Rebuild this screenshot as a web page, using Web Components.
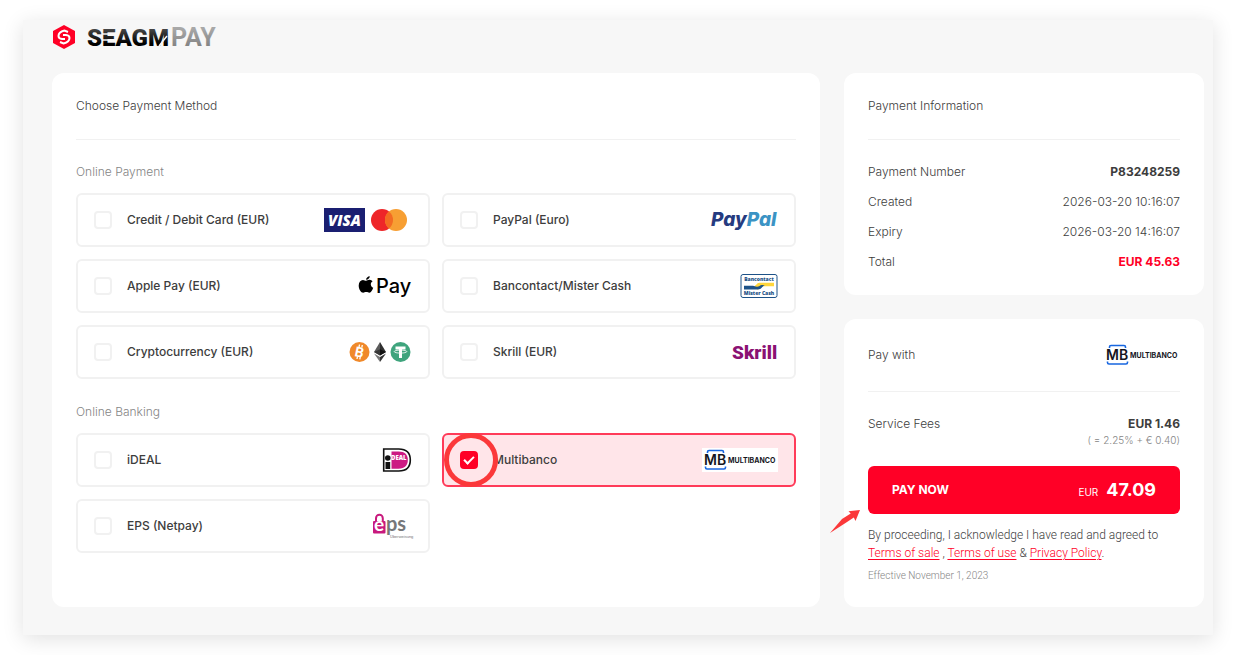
<!DOCTYPE html>
<html lang="en">
<head>
<meta charset="utf-8">
<meta name="viewport" content="width=device-width, initial-scale=1">
<title>SEAGM Pay</title>
<style>
    :root {
        --red: #ff0026;
        --text: #3d3d3d;
        --muted: #858585;
        --line: #f1f1f1;
        --narrow: Roboto, "Liberation Sans", sans-serif;
    }
    body {
        margin: 0;
        padding: 20px 23px;
        background: #fff;
        color: var(--text);
        font: 300 12px/18px Inter, "Liberation Sans", sans-serif;
    }
</style>
</head>
<body>
<checkout-page>
    <seagm-logo slot="header"></seagm-logo>

    <page-card slot="main">
        <span slot="title">Choose Payment Method</span>
        <payment-group label="Online Payment">
            <payment-option brand="cards">Credit / Debit Card (EUR)</payment-option>
            <payment-option brand="paypal">PayPal (Euro)</payment-option>
            <payment-option brand="applepay">Apple Pay (EUR)</payment-option>
            <payment-option brand="bancontact">Bancontact/Mister Cash</payment-option>
            <payment-option brand="crypto">Cryptocurrency (EUR)</payment-option>
            <payment-option brand="skrill">Skrill (EUR)</payment-option>
        </payment-group>
        <payment-group label="Online Banking">
            <payment-option brand="ideal">iDEAL</payment-option>
            <payment-option brand="multibanco" checked marked>Multibanco</payment-option>
            <payment-option brand="eps">EPS (Netpay)</payment-option>
        </payment-group>
    </page-card>

    <page-card slot="side">
        <span slot="title">Payment Information</span>
        <info-list>
            <info-row label="Payment Number" strong>P83248259</info-row>
            <info-row label="Created">2026-03-20 10:16:07</info-row>
            <info-row label="Expiry">2026-03-20 14:16:07</info-row>
            <info-row label="Total" strong accent>EUR 45.63</info-row>
        </info-list>
    </page-card>

    <page-card slot="side">
        <span slot="title">Pay with</span>
        <brand-logo slot="title" name="multibanco"></brand-logo>
        <info-row label="Service Fees" note="( = 2.25% + € 0.40)" strong>EUR 1.46</info-row>
        <pay-button currency="EUR" amount="47.09">PAY NOW</pay-button>
        <terms-note></terms-note>
    </page-card>
</checkout-page>

<script>
const LOGOS = {
    cards: `<svg width="88" height="24" viewBox="0 0 88 24">
        <rect width="41" height="24" fill="#1a1f71"/>
        <text x="4" y="18" font-family="Open Sans" font-size="15" font-weight="800" font-style="italic" fill="#fff">VISA</text>
        <circle cx="58" cy="12" r="11" fill="#ee2629"/>
        <circle cx="72" cy="12" r="11" fill="#f79f33"/>
        <path d="M65 3.500a11 11 0 0 1 0 17a11 11 0 0 1 0-17z" fill="#f36b22"/>
    </svg>`,
    paypal: `<svg width="68" height="24" viewBox="0 0 68 24">
        <text x="1" y="18" font-family="Inter" font-size="19" font-weight="800" font-style="italic" fill="#253b80">Pay<tspan fill="#3b93c4">Pal</tspan></text>
    </svg>`,
    applepay: `<svg width="54" height="24" viewBox="0 0 54 24">
        <path d="M11.800 2.200c.1 1.500-1.700 3.700-3.700 3.600c-.2-1.700 1.700-3.500 3.700-3.600z"/>
        <path d="M8.100 6.700c.8 0 1.800-1 3.600-.9c1.200.1 2.200.6 2.900 1.500c-2.700 1.700-2.200 5.300.6 6.400c-.8 2.200-2.100 5-3.800 5c-1.200 0-1.600-.7-3.100-.7s-2 .7-3.100.7C3 18.700.7 15.500.7 11.500C.7 7.900 2.700 6 4.900 5.900c1.400 0 2.400.8 3.200.8z"/>
        <text x="18" y="19" font-family="Inter" font-size="20" font-weight="500">Pay</text>
    </svg>`,
    bancontact: `<svg width="38" height="24" viewBox="0 0 38 24">
        <rect x="1" y=".5" width="36" height="23" rx="2" fill="#fff" stroke="#1d5288"/>
        <text x="19" y="7" font-family="Open Sans" font-size="5" font-weight="800" text-anchor="middle" fill="#1d5288">Bancontact</text>
        <path d="M13 12.500c3 0 3.500-3.800 6.500-3.800H34v3.600H24c-3 0-3.500 3.200-6.500 3.200z" fill="#ffd63b"/>
        <path d="M4 11.800h9c1.500 0 2 .9 4 .9s3-1.800 5-1.800h3c-2 0-3 4.600-7 4.600H4z" fill="#1d5288"/>
        <text x="19" y="21" font-family="Open Sans" font-size="5" font-weight="800" text-anchor="middle" fill="#1d5288">Mister Cash</text>
    </svg>`,
    crypto: `<svg width="64" height="24" viewBox="0 0 64 24">
        <circle cx="11.500" cy="12" r="10" fill="#f0892a"/>
        <text x="7" y="17" font-family="Roboto" font-size="14" font-weight="700" fill="#fff" transform="rotate(12 11.500 12)">B</text>
        <path d="M11.500 4.500l-.5 2.700M14.300 5l-.5 2.700M9.500 16.300l-.5 2.700M12.300 16.700l-.5 2.700" stroke="#fff" stroke-width="1.300"/>
        <path d="M32 2l-6 10l6 3.500z" fill="#5b5b5b"/>
        <path d="M32 2l6 10l-6 3.500z" fill="#303030"/>
        <path d="M26 12l6-2.700v6.200z" fill="#373737"/>
        <path d="M38 12l-6-2.700v6.200z" fill="#111"/>
        <path d="M26 13.500l6 3.500v5z" fill="#777"/>
        <path d="M38 13.500l-6 3.500v5z" fill="#333"/>
        <circle cx="52.500" cy="12" r="10" fill="#3fa47d"/>
        <path d="M47.500 6.500h10v3H54v8.500h-3V9.500h-3.500z" fill="#fff"/>
        <ellipse cx="52.500" cy="11.600" rx="6.300" ry="1.500" fill="none" stroke="#fff" stroke-width=".8"/>
    </svg>`,
    skrill: `<svg width="46" height="24" viewBox="0 0 46 24">
        <text x="0" y="19" font-family="Roboto" font-size="19" font-weight="900" fill="#8b1173">Skrill</text>
    </svg>`,
    ideal: `<svg width="30" height="24" viewBox="0 0 30 24">
        <path d="M1.700 1h15C24.500 1 28.300 5.200 28.300 12S24.500 23 16.700 23h-15z" fill="#fff" stroke="#111" stroke-width="1.600"/>
        <path d="M9.500 3.500h7c6.500 0 9.300 3.200 9.300 8.500s-2.800 8.700-9.300 8.700h-7z" fill="#cc1a83"/>
        <circle cx="5.800" cy="10" r="2.800" fill="#111"/>
        <path d="M3.500 14h4.700v7H3.500z" fill="#111"/>
        <text x="9" y="12" font-family="Open Sans" font-size="6" font-weight="800" fill="#fff">DEAL</text>
    </svg>`,
    multibanco: `<svg width="76" height="24" viewBox="0 0 76 24">
        <rect width="76" height="24" fill="#fff"/>
        <path d="M5.500 5V4q0-1.500 1.500-1.500h13q1.500 0 1.500 1.500v1M3.500 18.500v1Q3.500 21 5 21h17q1.500 0 1.500-1.500v-1" fill="none" stroke="#1766e0" stroke-width="1.600"/>
        <text x="2" y="17" font-family="Inter" font-size="14" font-weight="600" fill="#15151d">MB</text>
        <text x="26" y="15" font-family="Inter" font-size="7" font-weight="700" fill="#15151d">MULTIBANCO</text>
    </svg>`,
    eps: `<svg width="40" height="26" viewBox="0 0 40 26">
        <path d="M4 8V5.200a3.400 3.400 0 0 1 6.800 0V8" fill="none" stroke="#c8197d" stroke-width="2"/>
        <rect x="1" y="8" width="12.500" height="12.500" rx="1" fill="#c8197d"/>
        <text x="2" y="18" font-family="Lato" font-size="19" font-weight="700" fill="#fff">e</text>
        <text x="14" y="18" font-family="Lato" font-size="20" font-weight="700" fill="#767779">ps</text>
        <text x="18" y="25" font-family="Liberation Sans" font-size="4" fill="#767779">Überweisung</text>
    </svg>`
}

class BrandLogo extends HTMLElement {
    constructor() {
        super()
        this.attachShadow({ mode: "open" })
    }

    connectedCallback() {
        this.shadowRoot.innerHTML = `
            <style>
                :host { display: block; flex: none; }
                svg { display: block; overflow: visible; }
            </style>
            ${LOGOS[this.getAttribute("name")] || ""}
        `
    }
}

class SeagmLogo extends HTMLElement {
    constructor() {
        super()
        this.attachShadow({ mode: "open" }).innerHTML = `
            <style>
                :host { display: block; }
                svg { display: block; overflow: visible; }
            </style>
            <svg width="168" height="24" viewBox="0 0 168 24" role="img" aria-label="SEAGM Pay">
                <defs>
                    <linearGradient id="dark" x2="0" y2="1">
                        <stop offset=".2" stop-color="#444"/>
                        <stop offset=".7" stop-color="#000"/>
                    </linearGradient>
                    <linearGradient id="gray" x2="0" y2="1">
                        <stop offset=".2" stop-color="#a8a8a8"/>
                        <stop offset="1" stop-color="#777"/>
                    </linearGradient>
                </defs>
                <path d="M12 0l11 6v12l-11 6L1 18V6z" fill="#ff0026"/>
                <path d="M16 7l-3.500-1.500Q6.500 7 6.500 11q0 2.700 3.500 3h3" fill="none" stroke="#fff" stroke-width="2"/>
                <path d="M8 17l3.500 1.500Q17.500 17 17.500 13q0-2.700-3.500-3h-3" fill="none" stroke="#fff" stroke-width="2"/>
                <text x="35" y="21" font-family="Roboto" font-size="24" font-weight="900" fill="url(#dark)">SEAGM</text>
                <path d="M50 9h7M50 15h7M107 21l8-10" stroke="#f7f7f7" stroke-width="1.500"/>
                <text x="119" y="21" font-family="Roboto" font-size="25" font-weight="700" fill="url(#gray)">PAY</text>
            </svg>
        `
    }
}

class CheckoutPage extends HTMLElement {
    constructor() {
        super()
        this.attachShadow({ mode: "open" }).innerHTML = `
            <style>
                :host {
                    display: flex;
                    flex-direction: column;
                    gap: 24px;
                    padding: 5px 9px 28px 29px;
                    background: #f7f7f7;
                    box-shadow: 0 4px 20px rgba(0, 0, 0, .12);
                }
                main { display: flex; gap: 24px; }
                .methods { display: flex; flex: 1; min-width: 0; }
                aside { display: flex; flex-direction: column; gap: 24px; flex: 0 0 360px; }
                ::slotted(page-card[slot="main"]) { flex: 1; }
            </style>
            <header><slot name="header"></slot></header>
            <main>
                <div class="methods"><slot name="main"></slot></div>
                <aside><slot name="side"></slot></aside>
            </main>
        `
    }
}

class PageCard extends HTMLElement {
    constructor() {
        super()
        this.attachShadow({ mode: "open" }).innerHTML = `
            <style>
                :host {
                    display: block;
                    box-sizing: border-box;
                    padding: 24px;
                    border-radius: 12px;
                    background: #fff;
                }
                .title {
                    display: flex;
                    align-items: center;
                    justify-content: space-between;
                    padding-bottom: 24px;
                    border-bottom: 1px solid var(--line);
                }
                .content { display: flex; flex-direction: column; padding-top: 23px; }
            </style>
            <div class="title"><slot name="title"></slot></div>
            <div class="content"><slot></slot></div>
        `
    }
}

class PaymentGroup extends HTMLElement {
    constructor() {
        super()
        this.attachShadow({ mode: "open" })
    }

    connectedCallback() {
        this.shadowRoot.innerHTML = `
            <style>
                :host { display: block; }
                :host(:not(:first-of-type)) { margin-top: 24px; }
                .label { margin-bottom: 12px; color: var(--muted); }
                .grid { display: grid; grid-template-columns: 1fr 1fr; gap: 12px; }
            </style>
            <div class="label">${this.getAttribute("label")}</div>
            <div class="grid"><slot></slot></div>
        `
    }
}

class PaymentOption extends HTMLElement {
    constructor() {
        super()
        this.attachShadow({ mode: "open" })
    }

    connectedCallback() {
        this.shadowRoot.innerHTML = `
            <style>
                :host { display: block; position: relative; font-weight: 500; }
                label {
                    display: flex;
                    align-items: center;
                    height: 50px;
                    padding: 0 16px;
                    border: 2px solid var(--line);
                    border-radius: 6px;
                    cursor: pointer;
                }
                :host([checked]) label { border-color: #ff3b59; background: #ffe5e9; }
                input {
                    appearance: none;
                    display: grid;
                    place-items: center;
                    box-sizing: border-box;
                    width: 18px;
                    height: 18px;
                    margin: 0 15px 0 0;
                    border: 2px solid var(--line);
                    border-radius: 4px;
                    background: #fff;
                }
                input:checked {
                    border-color: var(--red);
                    background: var(--red);
                }
                input:checked::before {
                    content: "";
                    box-sizing: border-box;
                    width: 10px;
                    height: 6px;
                    margin-bottom: 3px;
                    border: solid #fff;
                    border-width: 0 0 2px 2px;
                    transform: rotate(-45deg);
                }
                .name { flex: 1; }
                .ring {
                    display: none;
                    position: absolute;
                    left: 2px;
                    top: 0;
                    box-sizing: border-box;
                    width: 54px;
                    height: 54px;
                    border: 5px solid #fb383a;
                    border-radius: 50%;
                    pointer-events: none;
                }
                :host([marked]) .ring { display: block; }
            </style>
            <label>
                <input type="checkbox">
                <span class="name"><slot></slot></span>
                <brand-logo name="${this.getAttribute("brand")}"></brand-logo>
            </label>
            <span class="ring"></span>
        `

        this.input = this.shadowRoot.querySelector("input")
        this.input.checked = this.hasAttribute("checked")
        this.input.addEventListener("change", () => this.select())
    }

    // only one method can be active at a time
    select() {
        document.querySelectorAll("payment-option").forEach(option => {
            const active = option === this
            option.toggleAttribute("checked", active)
            option.input.checked = active
        })
    }
}

class InfoList extends HTMLElement {
    constructor() {
        super()
        this.attachShadow({ mode: "open" }).innerHTML = `
            <style>
                :host { display: flex; flex-direction: column; gap: 12px; }
            </style>
            <slot></slot>
        `
    }
}

class InfoRow extends HTMLElement {
    constructor() {
        super()
        this.attachShadow({ mode: "open" })
    }

    connectedCallback() {
        const note = this.getAttribute("note")
        this.shadowRoot.innerHTML = `
            <style>
                :host { display: flex; justify-content: space-between; }
                .value { text-align: right; }
                :host([strong]) .value { font-weight: 700; }
                :host([accent]) .value { color: var(--red); }
                :host .note { font-size: 10px; line-height: 15px; font-weight: 300; color: var(--muted); }
            </style>
            <span>${this.getAttribute("label")}</span>
            <div class="value">
                <slot></slot>
                ${note ? `<div class="note">${note}</div>` : ""}
            </div>
        `
    }
}

class PayButton extends HTMLElement {
    constructor() {
        super()
        this.attachShadow({ mode: "open" })
    }

    connectedCallback() {
        this.shadowRoot.innerHTML = `
            <style>
                :host { display: block; position: relative; margin: 18px 0 12px; }
                button {
                    display: flex;
                    align-items: center;
                    justify-content: space-between;
                    width: 100%;
                    height: 48px;
                    padding: 0 24px;
                    border: 0;
                    border-radius: 6px;
                    background: var(--red);
                    color: #fff;
                    font: inherit;
                    font-weight: 700;
                    cursor: pointer;
                }
                .total { display: flex; align-items: baseline; gap: 8px; }
                .currency { font-size: 10px; font-weight: 400; }
                .amount { font-size: 18px; line-height: 24px; }
                .pointer { position: absolute; right: calc(100% + 8px); bottom: -19px; }
            </style>
            <button type="button">
                <span><slot></slot></span>
                <span class="total">
                    <span class="currency">${this.getAttribute("currency")}</span>
                    <span class="amount">${this.getAttribute("amount")}</span>
                </span>
            </button>
            <svg class="pointer" width="30" height="23" viewBox="0 0 30 23">
                <path d="M30 0L18.500 1.300l2.200 2.200L12 9L0 23l15.500-10l8.300-5.500L25.500 11z" fill="#fb383a"/>
            </svg>
        `
    }
}

class TermsNote extends HTMLElement {
    constructor() {
        super()
        this.attachShadow({ mode: "open" }).innerHTML = `
            <style>
                :host { display: block; font-family: var(--narrow); }
                p { margin: 0; }
                a { color: var(--red); text-underline-offset: 2px; }
                .date { margin-top: 6px; font-size: 10px; line-height: 15px; color: var(--muted); }
            </style>
            <p>By proceeding, I acknowledge I have read and agreed to <a href="#sale">Terms of sale</a> , <a href="#use">Terms of use</a> &amp; <a href="#privacy">Privacy Policy</a>.</p>
            <p class="date">Effective November 1, 2023</p>
        `
    }
}

customElements.define("brand-logo", BrandLogo)
customElements.define("seagm-logo", SeagmLogo)
customElements.define("checkout-page", CheckoutPage)
customElements.define("page-card", PageCard)
customElements.define("payment-group", PaymentGroup)
customElements.define("payment-option", PaymentOption)
customElements.define("info-list", InfoList)
customElements.define("info-row", InfoRow)
customElements.define("pay-button", PayButton)
customElements.define("terms-note", TermsNote)
</script>
</body>
</html>
